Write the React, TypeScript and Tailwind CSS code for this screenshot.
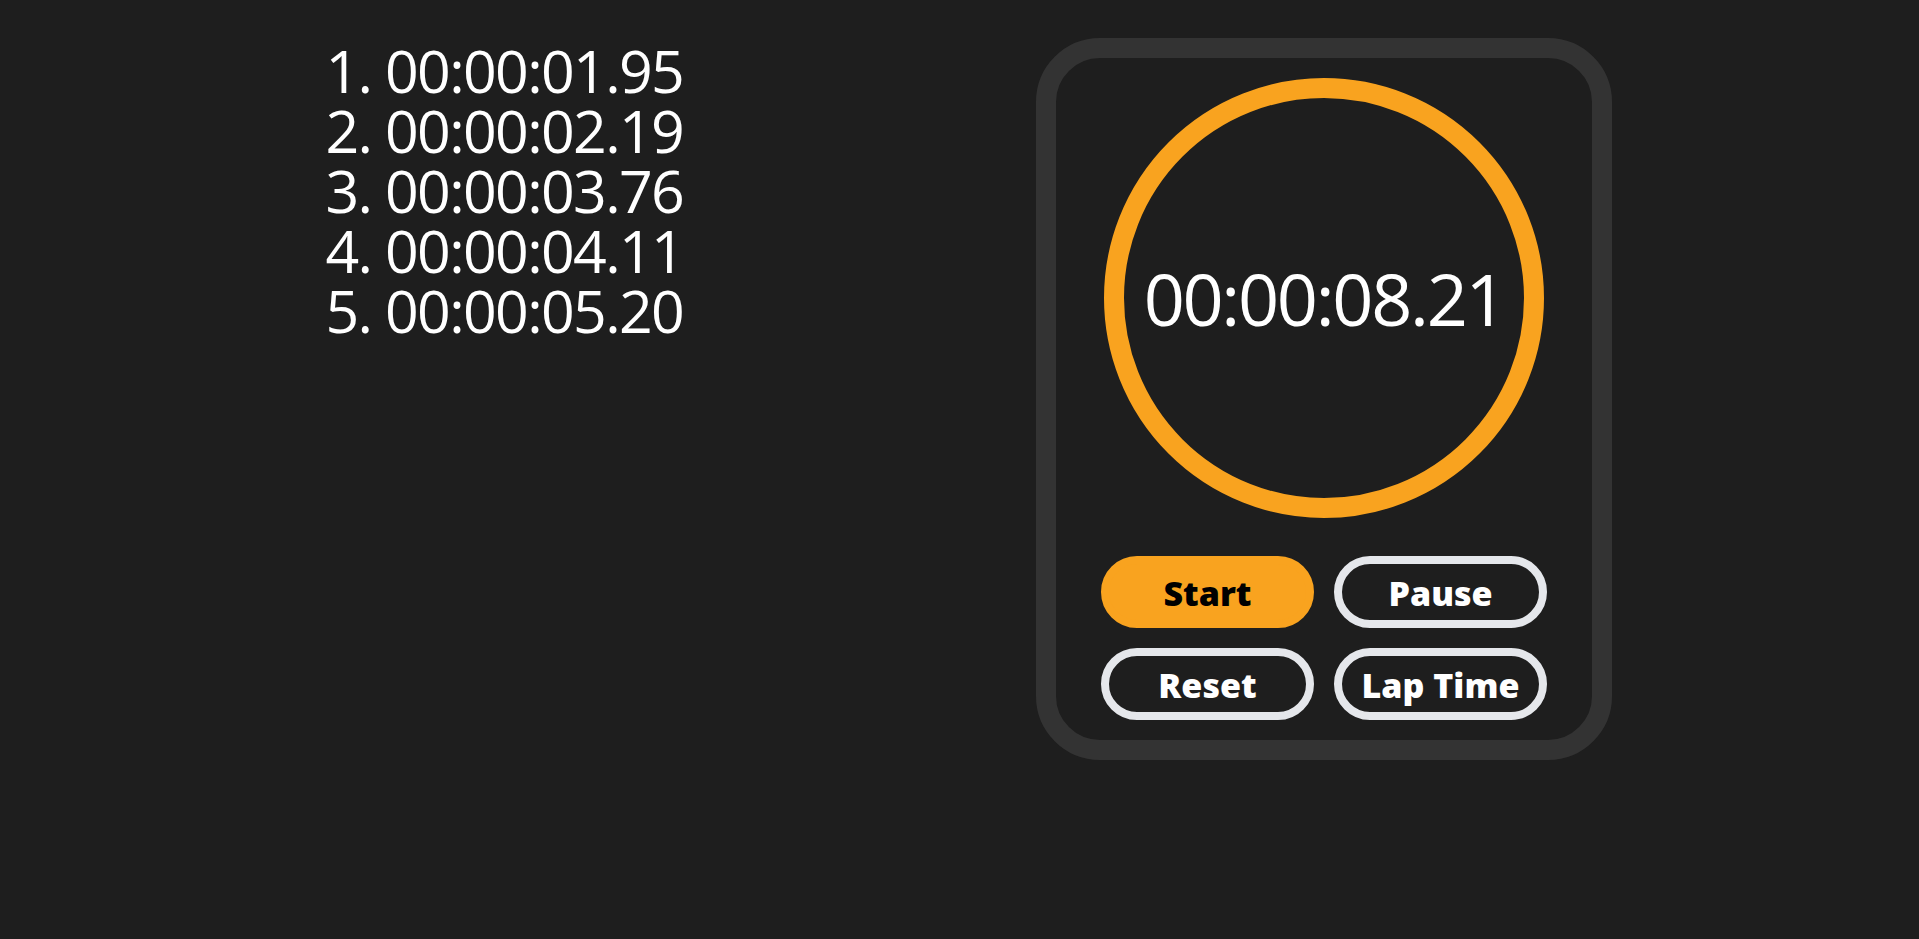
const laps = ['00:00:01.95', '00:00:02.19', '00:00:03.76', '00:00:04.11', '00:00:05.20']

function TimerButton({ label, primary }: { label: string; primary?: boolean }) {
    return (
        <button
            className={
                primary
                    ? 'flex h-[72px] items-center justify-center rounded-full border-[8px] border-[#f9a31f] bg-[#f9a31f] pt-[3px] text-[34px] font-extrabold text-black'
                    : 'flex h-[72px] items-center justify-center rounded-full border-[8px] border-[#e5e7eb] bg-transparent pt-[3px] text-[34px] font-extrabold text-white'
            }
        >
            {label}
        </button>
    )
}

export default function App() {
    return (
        <div className="flex min-h-screen items-start bg-[#1e1e1e] font-['Open_Sans',sans-serif] text-white">
            <ol className="ml-[385px] w-[651px] list-decimal pt-[40px] text-[59px] leading-[60px] tracking-[-0.028em]">
                {laps.map((lap) => (
                    <li key={lap}>{lap}</li>
                ))}
            </ol>

            <div className="mt-[38px] flex w-[576px] flex-col items-center rounded-[64px] border-[20px] border-[#333333] px-[45px] py-[20px]">
                <div className="flex h-[440px] w-[440px] items-center justify-center rounded-full border-[20px] border-[#f9a31f]">
                    <span className="text-[72px] tracking-[-0.032em]">00:00:08.21</span>
                </div>

                <div className="mt-[38px] grid w-full grid-cols-2 gap-5">
                    <TimerButton label="Start" primary />
                    <TimerButton label="Pause" />
                    <TimerButton label="Reset" />
                    <TimerButton label="Lap Time" />
                </div>
            </div>
        </div>
    )
}
